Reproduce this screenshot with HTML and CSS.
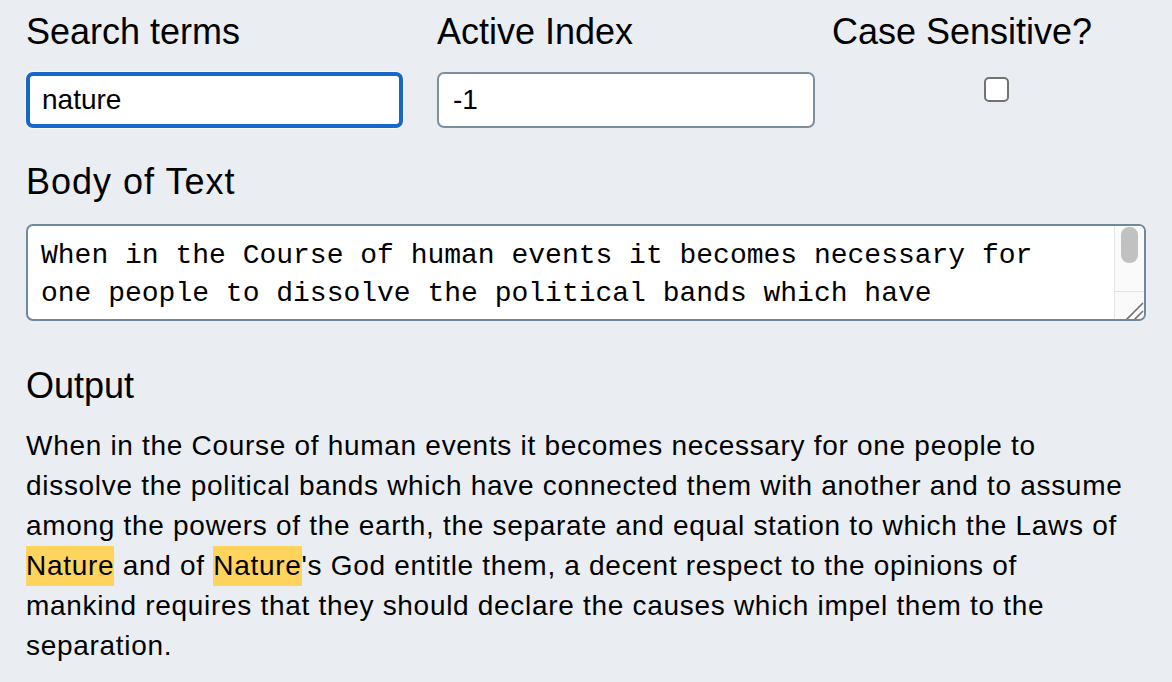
FILE: index.html
```html
<!DOCTYPE html>
<html lang="en">
<head>
<meta charset="utf-8">
<title>Search highlighter</title>
<link rel="stylesheet" href="styles.css">
</head>
<body>
<main class="app">
  <div class="controls">
    <div class="field field-search">
      <label class="label" for="search">Search terms</label>
      <input class="text-input is-focused" id="search" type="text" value="nature">
    </div>
    <div class="field field-index">
      <label class="label" for="index">Active Index</label>
      <input class="text-input" id="index" type="text" value="-1">
    </div>
    <div class="field field-case">
      <label class="label" for="case">Case Sensitive?</label>
      <input class="checkbox" id="case" type="checkbox">
    </div>
  </div>

  <section class="section section-body">
    <label class="label label-body" for="body">Body of Text</label>
    <div class="editor">
      <textarea class="body-text" id="body" spellcheck="false">When in the Course of human events it becomes necessary for one people to dissolve the political bands which have connected them with another and to assume among the powers of the earth, the separate and equal station to which the Laws of Nature and of Nature's God entitle them, a decent respect to the opinions of mankind requires that they should declare the causes which impel them to the separation.</textarea>
      <div class="scrollbar" aria-hidden="true">
        <div class="scroll-thumb"></div>
        <div class="scroll-space"></div>
        <div class="scroll-corner">
          <svg width="29" height="27" viewBox="0 0 29 27">
            <path d="M11 28 L28 11 M19 28 L28 19" stroke="#6f6f6f" stroke-width="1.6" fill="none"/>
          </svg>
        </div>
      </div>
    </div>
  </section>

  <section class="section section-output">
    <h2 class="label">Output</h2>
    <p class="output">When in the Course of human events it becomes necessary for one people to<br>dissolve the political bands which have connected them with another and to assume<br>among the powers of the earth, the separate and equal station to which the Laws of<br><mark class="hit">Nature</mark> and of <mark class="hit">Nature</mark>'s God entitle them, a decent respect to the opinions of<br>mankind requires that they should declare the causes which impel them to the<br>separation.</p>
  </section>
</main>
</body>
</html>
```

FILE: styles.css
```css
html, body {
  margin: 0;
  padding: 0;
  background: #eaeef2;
}

body {
  font-family: "Liberation Sans", Arial, sans-serif;
  color: #000;
}

.app {
  width: 1120px;
  padding: 12px 0 0 26px;
}

.label {
  display: block;
  margin: 0;
  font-size: 36px;
  font-weight: 400;
  line-height: 40px;
  height: 40px;
}

.label-body {
  letter-spacing: 1px;
}

.controls {
  display: flex;
  align-items: flex-start;
}

.field {
  display: flex;
  flex-direction: column;
}

.field-search {
  width: 377px;
  margin-right: 34px;
}

.field-index {
  width: 378px;
  margin-right: 17px;
}

.field-case {
  flex: 1;
}

.text-input {
  box-sizing: border-box;
  margin: 20px 0 0 0;
  width: 100%;
  height: 56px;
  padding: 0 14px;
  border: 2px solid #7d8f9d;
  border-radius: 7px;
  background: #fff;
  font-family: "Liberation Sans", Arial, sans-serif;
  font-size: 28px;
  color: #000;
  outline: none;
}

.text-input.is-focused {
  border: 4px solid #1767c9;
  padding: 0 12px;
  box-shadow: 0 0 0 1px #f7f9fb;
}

.checkbox {
  appearance: none;
  -webkit-appearance: none;
  box-sizing: border-box;
  width: 25px;
  height: 25px;
  margin: 25px 0 0 152px;
  border: 2px solid #727272;
  border-radius: 5px;
  background: #fff;
}

.section-body {
  margin-top: 34px;
}

.editor {
  box-sizing: border-box;
  display: flex;
  align-items: flex-start;
  width: 1120px;
  height: 97px;
  margin-top: 22px;
  border: 2px solid #71879a;
  border-radius: 7px;
  background: #fff;
  overflow: hidden;
}

.body-text {
  flex: 1;
  box-sizing: border-box;
  height: 87px;
  margin: 0;
  padding: 11px 20px 0 13px;
  border: 0;
  background: transparent;
  font-family: "Liberation Mono", "Courier New", monospace;
  font-size: 28px;
  line-height: 38px;
  color: #000;
  overflow: hidden;
  resize: none;
  outline: none;
}

.scrollbar {
  display: flex;
  flex-direction: column;
  align-self: stretch;
  width: 29px;
  flex: none;
  background: #fafafa;
  border-left: 1px solid #e3e3e3;
}

.scroll-thumb {
  width: 17px;
  height: 36px;
  margin: 1px 0 0 6px;
  border-radius: 8px;
  background: #c1c1c1;
}

.scroll-space {
  flex: 1;
}

.scroll-corner {
  height: 27px;
  border-top: 1px solid #e3e3e3;
  line-height: 0;
}

.scroll-corner svg {
  display: block;
}

.section-output {
  margin-top: 45px;
}

.output {
  margin: 20px 0 0 0;
  font-size: 28px;
  line-height: 40px;
  letter-spacing: 0.7px;
  white-space: nowrap;
}

.hit {
  display: inline-block;
  background: #ffd45c;
  color: inherit;
  line-height: 40px;
}
```
